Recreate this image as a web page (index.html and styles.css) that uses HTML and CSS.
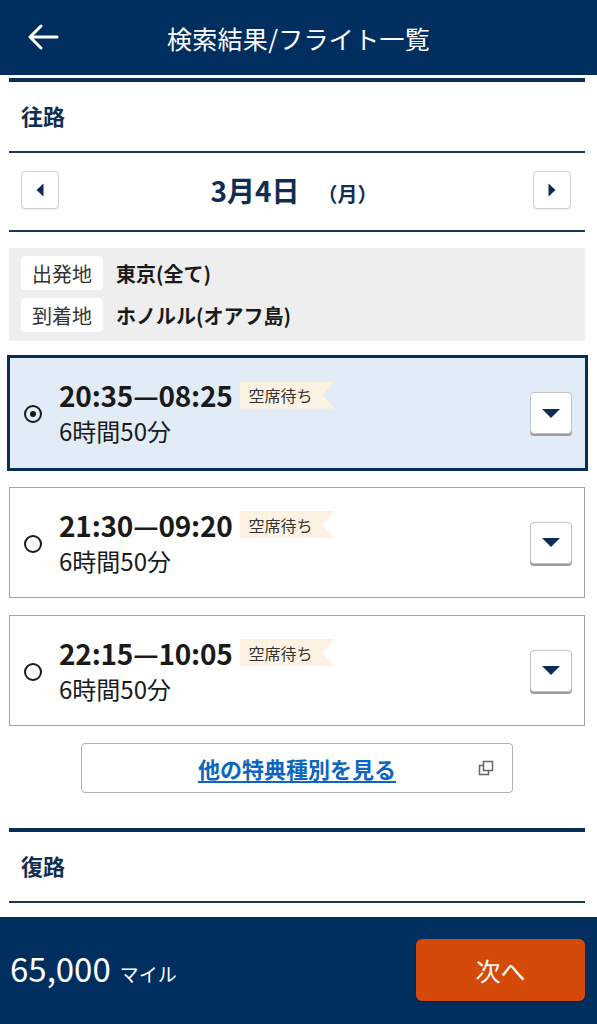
FILE: index.html
```html
<!DOCTYPE html>
<html lang="ja">
<head>
<meta charset="utf-8">
<title>検索結果/フライト一覧</title>
<link rel="stylesheet" href="styles.css">
</head>
<body>
<header class="topbar">
  <svg class="back" width="32" height="28" viewBox="0 0 32 28"><path d="M3 14H30M14 3L3 14L14 25" fill="none" stroke="#fff" stroke-width="3" stroke-linecap="round" stroke-linejoin="round"/></svg>
  <h1 class="title">検索結果/フライト一覧</h1>
</header>
<main class="content">
  <section class="leg">
    <div class="leg-head"><h2>往路</h2></div>
    <div class="date-row">
      <button class="nav-btn"><svg width="10" height="16" viewBox="0 0 10 16"><path d="M8.5 1.5L1.5 8L8.5 14.5Z" fill="#0b2d55"/></svg></button>
      <div class="date"><span class="date-main">3月4日</span><span class="date-dow">（月）</span></div>
      <button class="nav-btn"><svg width="10" height="16" viewBox="0 0 10 16"><path d="M1.5 1.5L8.5 8L1.5 14.5Z" fill="#0b2d55"/></svg></button>
    </div>
    <div class="route">
      <div class="route-row"><span class="route-label">出発地</span><span class="route-value">東京(全て)</span></div>
      <div class="route-row"><span class="route-label">到着地</span><span class="route-value">ホノルル(オアフ島)</span></div>
    </div>

    <div class="flight selected">
      <span class="radio on"></span>
      <div class="info">
        <div class="time-row"><span class="time">20:35—08:25</span><span class="badge">空席待ち</span></div>
        <div class="duration">6時間50分</div>
      </div>
      <button class="expand"><svg width="20" height="11" viewBox="0 0 20 11"><path d="M1 1H19L10 10Z" fill="#0b2d55"/></svg></button>
    </div>
    <div class="flight">
      <span class="radio"></span>
      <div class="info">
        <div class="time-row"><span class="time">21:30—09:20</span><span class="badge">空席待ち</span></div>
        <div class="duration">6時間50分</div>
      </div>
      <button class="expand"><svg width="20" height="11" viewBox="0 0 20 11"><path d="M1 1H19L10 10Z" fill="#0b2d55"/></svg></button>
    </div>
    <div class="flight">
      <span class="radio"></span>
      <div class="info">
        <div class="time-row"><span class="time">22:15—10:05</span><span class="badge">空席待ち</span></div>
        <div class="duration">6時間50分</div>
      </div>
      <button class="expand"><svg width="20" height="11" viewBox="0 0 20 11"><path d="M1 1H19L10 10Z" fill="#0b2d55"/></svg></button>
    </div>

    <div class="other-wrap">
      <a class="other" href="#"><span class="other-text">他の特典種別を見る</span>
        <svg class="ext" width="16" height="16" viewBox="0 0 16 16"><rect x="5.5" y="1.5" width="9" height="9" fill="#fff" stroke="#666" stroke-width="1.5"/><path d="M5.5 5.5H1.5V14.5H10.5V10.5" fill="none" stroke="#666" stroke-width="1.5"/></svg>
      </a>
    </div>
  </section>

  <section class="leg return">
    <div class="leg-head"><h2>復路</h2></div>
  </section>
</main>
<footer class="bottombar">
  <div class="miles"><span class="miles-num">65,000</span><span class="miles-unit">マイル</span></div>
  <button class="next">次へ</button>
</footer>
</body>
</html>
```

FILE: styles.css
```css
* { box-sizing: border-box; }
html, body { margin: 0; padding: 0; }
body {
  width: 597px;
  height: 1024px;
  overflow: hidden;
  background: #fff;
  font-family: "Noto Sans CJK JP", "Noto Sans", sans-serif;
  color: #1a1a1a;
}
button { font-family: inherit; padding: 0; cursor: pointer; }

.topbar {
  height: 75px;
  background: #002f5f;
  display: flex;
  align-items: center;
  justify-content: center;
  position: relative;
}
.back { position: absolute; left: 27px; top: 23px; }
.title {
  margin: 0;
  font-size: 25px;
  font-weight: 400;
  color: #fff;
  letter-spacing: 0.3px;
}

.content { padding: 0 12px 0 9px; }

.leg {
  margin-top: 3px;
  border-top: 4px solid #0a2d56;
}
.leg-head {
  height: 71px;
  display: flex;
  align-items: center;
  padding: 0 0 4px 12px;
  border-bottom: 2px solid #1c3656;
}
.leg-head h2 {
  margin: 0;
  font-size: 22px;
  font-weight: 700;
  color: #0f2e52;
}

.date-row {
  height: 79px;
  display: flex;
  align-items: center;
  justify-content: space-between;
  padding: 0 14px 4px 12px;
  border-bottom: 2px solid #1c3656;
}
.nav-btn {
  width: 38px;
  height: 38px;
  border: 1px solid #cfcfcf;
  border-radius: 4px;
  background: #fff;
  display: flex;
  align-items: center;
  justify-content: center;
  box-shadow: 0 1px 1px rgba(0,0,0,0.08);
}
.date { display: flex; align-items: baseline; color: #0f2e52; font-weight: 700; margin-right: 4px; }
.date-main { font-size: 28px; }
.date-dow { font-size: 20px; margin-left: 18px; }

.route {
  margin-top: 16px;
  background: #eeeeee;
  padding: 8px 12px 9px;
  display: flex;
  flex-direction: column;
  gap: 8px;
}
.route-row { display: flex; align-items: center; }
.route-label {
  width: 82px;
  height: 34px;
  background: #fff;
  border-radius: 4px;
  display: flex;
  align-items: center;
  justify-content: center;
  font-size: 20px;
  color: #333;
}
.route-value {
  margin-left: 13px;
  font-size: 20px;
  font-weight: 700;
  color: #1a1a1a;
}

.flight {
  margin-top: 16px;
  height: 111px;
  border: 1px solid #a4a4a4;
  background: #fff;
  display: flex;
  align-items: center;
  padding: 0 12px 0 14px;
}
.flight.selected {
  margin: 14px -3px 0 -2px;
  height: 116px;
  border: 3px solid #0a2d56;
  background: #e2ecf6;
  padding: 0 13px 0 14px;
}
.flight.selected + .flight { margin-top: 16px; }
.flight + .flight + .flight { margin-top: 17px; }

.radio {
  width: 18px;
  height: 18px;
  border: 2.5px solid #1a1a1a;
  border-radius: 50%;
  flex: none;
  position: relative;
  margin-top: 2px;
}
.radio.on::after {
  content: "";
  position: absolute;
  left: 50%;
  top: 50%;
  width: 6px;
  height: 6px;
  margin: -3px 0 0 -3px;
  border-radius: 50%;
  background: #1a1a1a;
}
.info { flex: 1; margin-left: 17px; }
.time-row { display: flex; align-items: center; height: 36px; }
.time { font-size: 28px; font-weight: 700; color: #1a1a1a; letter-spacing: -0.2px; }
.badge {
  margin-left: 7px;
  height: 27px;
  padding: 0 22px 0 9px;
  background: #fdf2e2;
  font-size: 16px;
  color: #333;
  display: flex;
  align-items: center;
  clip-path: polygon(0 0, 100% 0, calc(100% - 12px) 50%, 100% 100%, 0 100%);
}
.duration { font-size: 24px; color: #1a1a1a; line-height: 36px; }

.expand {
  width: 42px;
  height: 42px;
  background: #fff;
  border: 1px solid #c2c2c2;
  border-radius: 4px;
  box-shadow: 0 2px 0 #9c9c9c;
  display: flex;
  align-items: center;
  justify-content: center;
  flex: none;
}

.other-wrap { display: flex; justify-content: center; margin-top: 17px; }
.other {
  width: 432px;
  height: 50px;
  border: 1px solid #b0b0b0;
  border-radius: 4px;
  display: flex;
  align-items: center;
  justify-content: center;
  position: relative;
  text-decoration: none;
}
.other-text {
  font-size: 22px;
  font-weight: 700;
  color: #0c66c0;
  text-decoration: underline;
  text-underline-offset: 3px;
}
.ext { position: absolute; right: 18px; top: 16px; }

.leg.return { margin-top: 35px; }

.bottombar {
  margin-top: 14px;
  height: 107px;
  background: #002f5f;
  display: flex;
  align-items: flex-start;
  justify-content: space-between;
  padding: 22px 12px 0 10px;
}
.miles { display: flex; align-items: baseline; color: #fff; margin-top: 5px; }
.miles-num { font-size: 33px; font-weight: 400; }
.miles-unit { font-size: 19px; margin-left: 9px; }
.next {
  width: 169px;
  height: 62px;
  background: #d54a08;
  border: none;
  border-radius: 6px;
  color: #fff;
  font-size: 25px;
  font-weight: 400;
  box-shadow: 0 1px 2px rgba(0,0,0,0.3);
}
```
